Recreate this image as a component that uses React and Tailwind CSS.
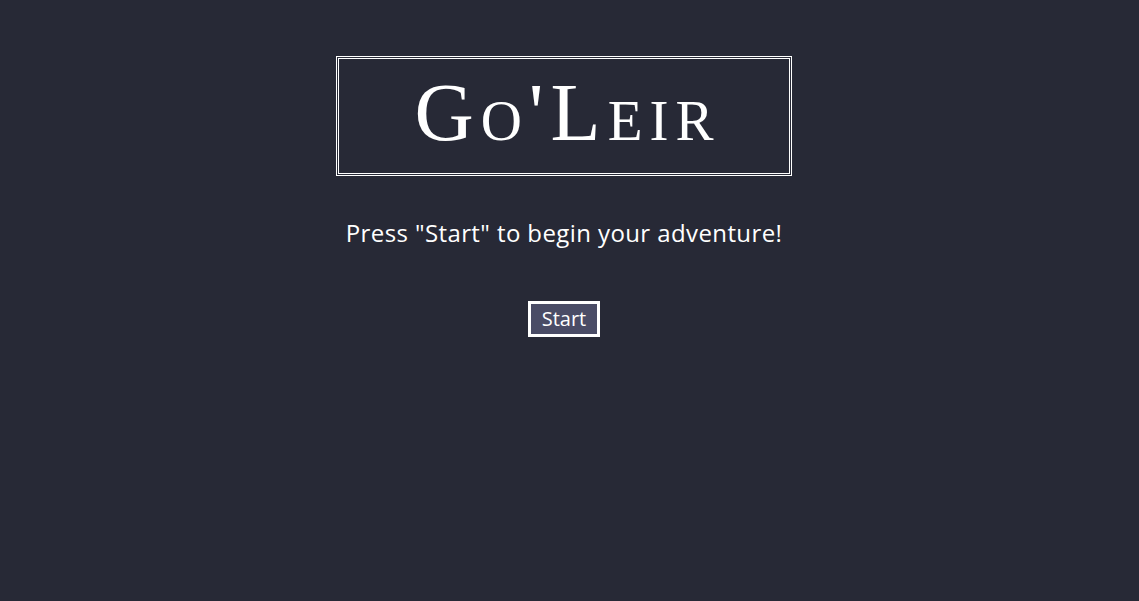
export default function App() {
  return (
    <div className="min-h-[601px] w-full bg-[#272936]">
      <div className="flex w-[1128px] flex-col items-center pt-[56px]">
        <div className="flex h-[120px] w-[456px] items-center justify-center border-[3px] border-double border-white">
          <h1
            className="pb-[6px] pl-[7px] text-[82px] leading-none tracking-[7px] text-white [font-variant-caps:small-caps]"
            style={{ fontFamily: '"Liberation Serif", serif' }}
          >
            Go'Leir
          </h1>
        </div>
        <p
          className="mt-[41px] text-[24px] leading-[32px] tracking-[0.4px] text-white"
          style={{ fontFamily: '"Open Sans", sans-serif' }}
        >
          Press "Start" to begin your adventure!
        </p>
        <button
          className="mt-[52px] flex h-[36px] w-[72px] items-center justify-center border-[3px] border-white bg-[#4a4c66] text-[20px] text-white"
          style={{ fontFamily: '"Open Sans", sans-serif' }}
        >
          Start
        </button>
      </div>
    </div>
  );
}
